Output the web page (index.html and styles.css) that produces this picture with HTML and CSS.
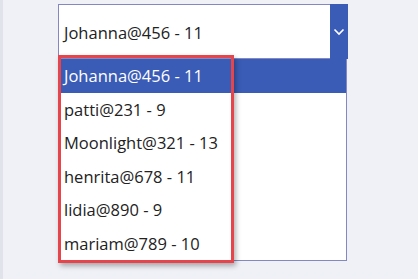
FILE: index.html
```html
<!DOCTYPE html>
<html lang="en">
<head>
    <meta charset="UTF-8">
    <title>Dropdown</title>
    <link rel="stylesheet" href="styles.css">
</head>
<body>
    <div class="page">
        <div class="combo">
            <div class="combo-field">
                <span class="combo-value">Johanna@456 - 11</span>
                <span class="combo-btn">
                    <svg width="12" height="8" viewBox="0 0 12 8">
                        <polyline points="1.5,1.5 6,6 10.5,1.5" fill="none" stroke="#fff" stroke-width="1.6"/>
                    </svg>
                </span>
            </div>
            <ul class="combo-list">
                <li class="selected">Johanna@456 - 11</li>
                <li>patti@231 - 9</li>
                <li>Moonlight@321 - 13</li>
                <li>henrita@678 - 11</li>
                <li>lidia@890 - 9</li>
                <li>mariam@789 - 10</li>
            </ul>
            <div class="highlight"></div>
        </div>
    </div>
</body>
</html>
```

FILE: styles.css
```css
/* dropdown with highlighted options */
html, body {
    margin: 0;
    padding: 0;
}
body {
    background: #eff1f7;
    font-family: "Open Sans", "Liberation Sans", sans-serif;
    color: #222;
}
.page {
    height: 279px;
    border-left: 3px solid #e1e3ea;
    padding-top: 4px;
    box-sizing: border-box;
}
.combo {
    position: relative;
    margin-left: 55px;
    width: 290px;
}
.combo-field {
    display: flex;
    height: 55px;
    background: #fff;
    border: 1px solid #8388c2;
    border-right: none;
    box-sizing: border-box;
}
.combo-value {
    flex: 1;
    display: flex;
    align-items: center;
    padding-left: 5px;
    padding-top: 1px;
    font-size: 16.5px;
}
.combo-btn {
    width: 18px;
    background: #3a5cb6;
    display: flex;
    align-items: center;
    justify-content: center;
    margin-top: -1px;
    margin-bottom: -1px;
}
.combo-list {
    list-style: none;
    margin: 0;
    padding: 0;
    width: 289px;
    background: #fff;
    border: 1px solid #8388c2;
    border-top: none;
    box-sizing: border-box;
}
.combo-list li {
    height: 33.5px;
    display: flex;
    align-items: center;
    padding-left: 5px;
    font-size: 16.5px;
}
.combo-list li.selected {
    background: #3a5cb6;
    color: #fff;
}
.highlight {
    position: absolute;
    left: 0;
    top: 51px;
    width: 176px;
    height: 208px;
    border: 3px solid #e5454b;
    box-sizing: border-box;
    box-shadow: 2px 3px 5px rgba(0, 0, 0, 0.3);
}
```
